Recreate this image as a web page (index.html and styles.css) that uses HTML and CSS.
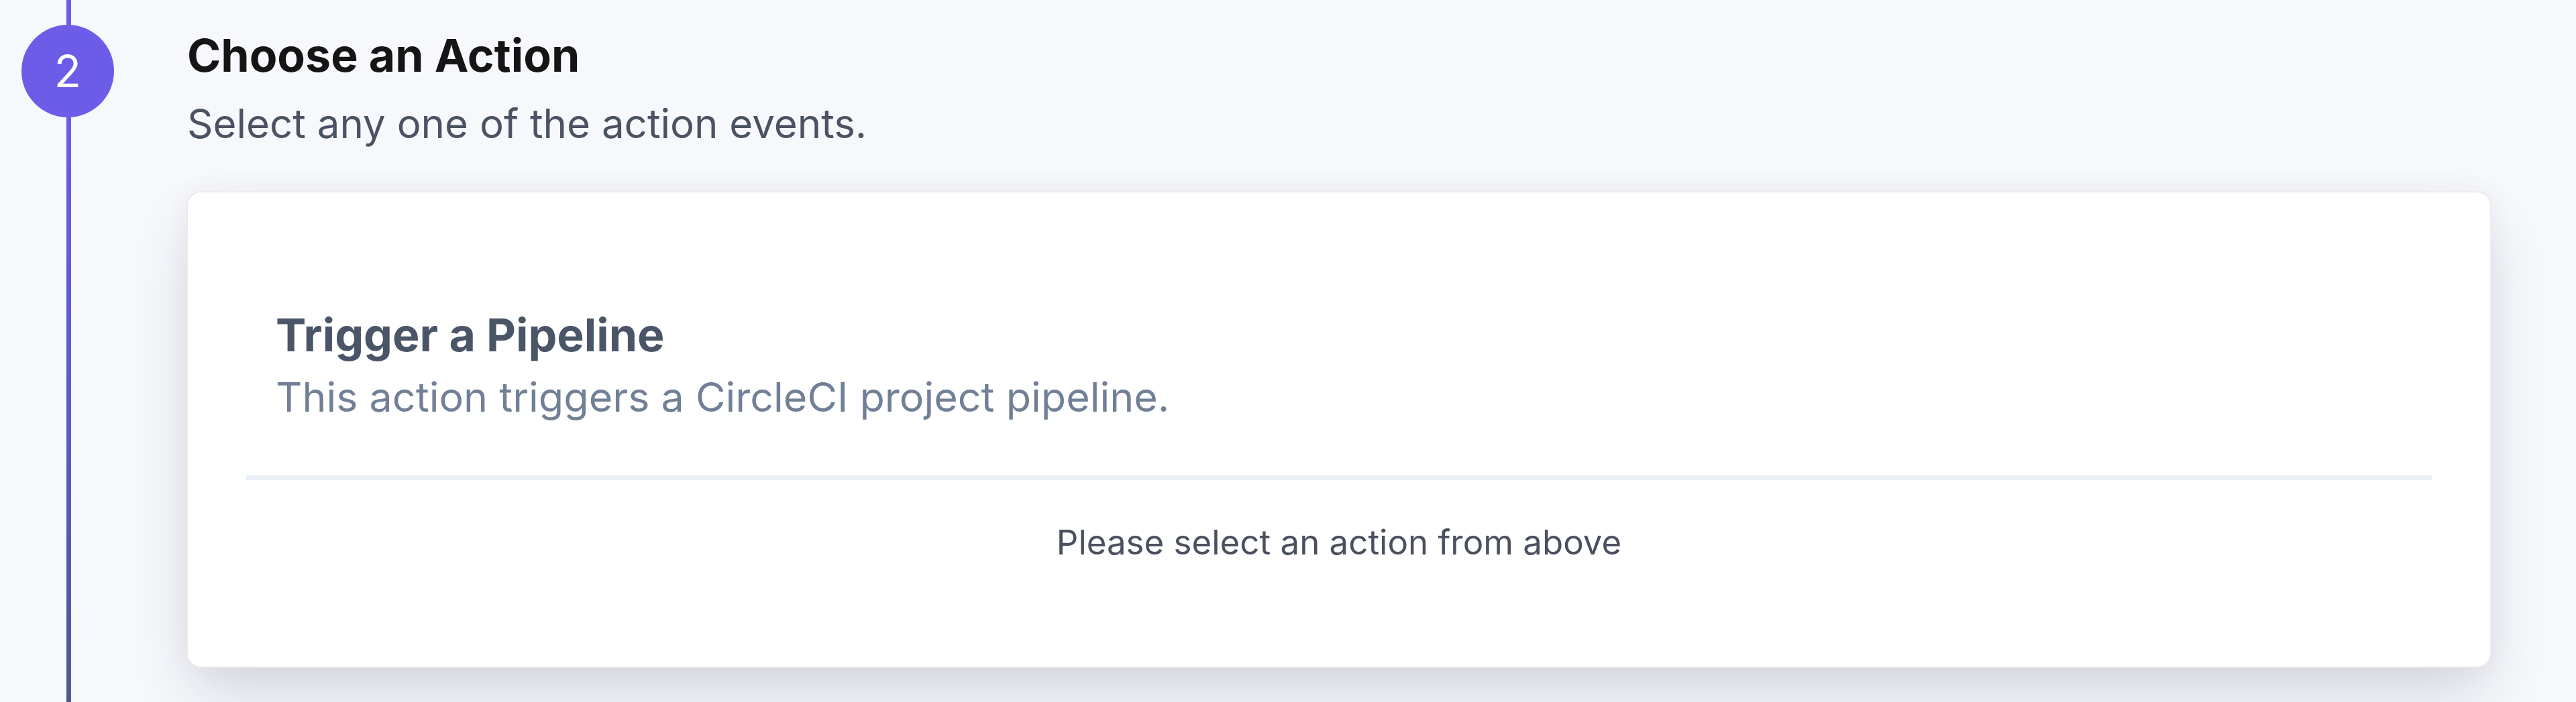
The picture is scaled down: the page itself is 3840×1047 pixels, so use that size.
FILE: index.html
```html
<!DOCTYPE html>
<html lang="en">
<head>
    <meta charset="UTF-8">
    <meta name="viewport" content="width=device-width, initial-scale=1.0">
    <title>Choose an Action</title>
    <link rel="stylesheet" href="styles.css">
</head>
<body>
    <div class="step">
        <!-- timeline rail with the step number -->
        <div class="step-rail">
            <div class="rail-line rail-top"></div>
            <div class="step-number">2</div>
            <div class="rail-line rail-bottom"></div>
        </div>

        <div class="step-body">
            <h2 class="step-title">Choose an Action</h2>
            <p class="step-subtitle">Select any one of the action events.</p>

            <div class="action-card">
                <div class="action-list">
                    <div class="action-item">
                        <h3>Trigger a Pipeline</h3>
                        <p>This action triggers a CircleCI project pipeline.</p>
                    </div>
                </div>

                <div class="divider"></div>

                <p class="empty-state">Please select an action from above</p>
            </div>
        </div>
    </div>
</body>
</html>
```

FILE: styles.css
```css
* {
    margin: 0;
    padding: 0;
    box-sizing: border-box;
}

html, body {
    height: 100%;
    overflow: hidden;
}

body {
    background-color: #f7f8fc;
    font-family: 'Inter', 'Noto Sans', sans-serif;
    color: #1a1a1a;
}

.step {
    display: flex;
    height: 100%;
}

/* Left timeline */
.step-rail {
    width: 278px;
    flex-shrink: 0;
    display: flex;
    flex-direction: column;
    padding-left: 33px;
}

.rail-line {
    width: 7px;
    margin-left: 66px;
}

.rail-top {
    height: 37px;
    background-color: #6c5ce7;
}

.rail-bottom {
    flex: 1;
    background: linear-gradient(180deg, #6a5ce4 0%, #5c5cc8 45%, #4d5a8e 100%);
}

.step-number {
    width: 138px;
    height: 138px;
    border-radius: 50%;
    background-color: #6c5ce7;
    color: #ffffff;
    font-size: 66px;
    font-weight: 400;
    display: flex;
    align-items: center;
    justify-content: center;
    margin-left: -1px;
}

/* Right content */
.step-body {
    flex: 1;
    padding-top: 39px;
    padding-right: 126px;
}

.step-title {
    font-size: 68px;
    line-height: 86px;
    font-weight: 700;
    color: #151515;
    padding-left: 1px;
}

.step-subtitle {
    font-size: 60px;
    line-height: 87px;
    color: #4b5262;
    margin-top: 16px;
    padding-left: 1px;
}

.action-card {
    margin-top: 57px;
    background-color: #ffffff;
    border: 2px solid #ebebee;
    border-radius: 22px;
    padding: 169px 87px 146px;
    box-shadow: 0 45px 90px -10px rgba(30, 35, 60, 0.16), 0 0 40px rgba(30, 35, 60, 0.04);
}

.action-list {
    margin-bottom: 76px;
}

.action-item {
    padding: 0 44px;
}

.action-item h3 {
    font-size: 68px;
    line-height: 86px;
    font-weight: 700;
    color: #4a5568;
}

.action-item p {
    font-size: 61px;
    line-height: 82px;
    color: #718096;
    margin-top: 9px;
}

.divider {
    height: 7px;
    background-color: #eaeff6;
}

.empty-state {
    margin-top: 54px;
    text-align: center;
    font-size: 51px;
    line-height: 78px;
    color: #4b5060;
}
```
